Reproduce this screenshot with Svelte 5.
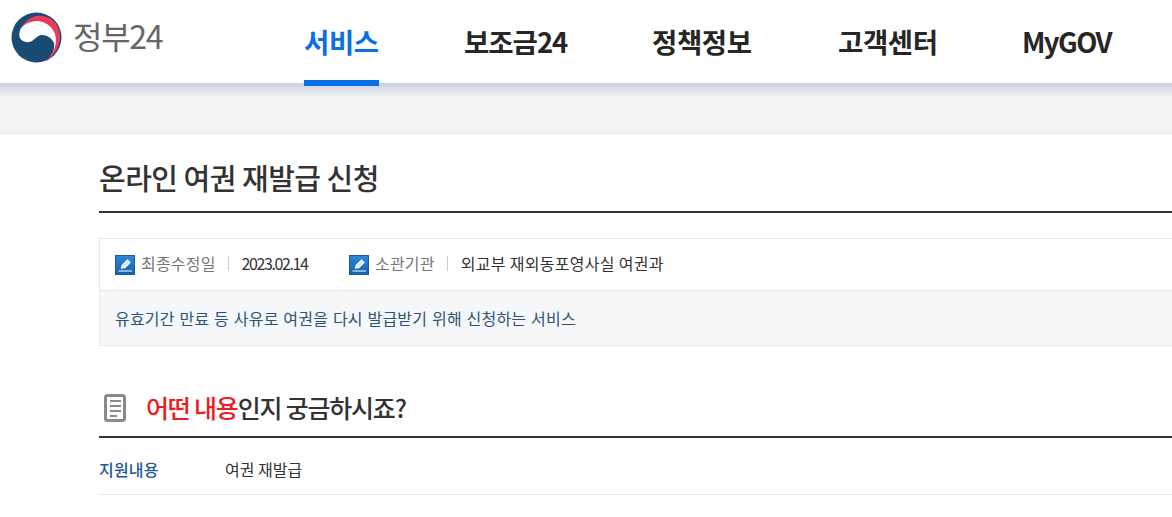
<script>
    const menus = ["서비스", "보조금24", "정책정보", "고객센터", "MyGOV"];
</script>

<div class="page">
    <header>
        <div class="logo">
            <svg width="60" height="58" viewBox="0 0 60 58">
                <circle cx="30.5" cy="29.5" r="25" fill="#1a4b73"/>
                <path d="M15 20 C19 15 26 12.5 33 13 C41 14 47 19 50 26 C53 36 48 46 40 53.5 C47 47 49 40 48 35 C46 30 41 27 36 27 C31 27 29 32 25 33.5 C20 35.5 15 33 13.5 29 C13 26 13.5 22.5 15 20Z" fill="#fff"/>
                <path d="M15 20 C19 12 26 8 33 7.7 C42 7.7 49 12 52 19 C56 29 54 39 47 47 C45 50 42 52 39.5 54 C46 47 50 40 50 32 C50 25 46 19 41 16 C35 12.5 29 12 24 14 C20 15 17 17 15 20Z" fill="#ee3a56"/>
            </svg>
            <span>정부24</span>
        </div>
        <nav>
            {#each menus as menu, i}
                <a class:active={i === 0} href="#top">{menu}</a>
            {/each}
        </nav>
    </header>
    <div class="band"></div>

    <main>
        <h1>온라인 여권 재발급 신청</h1>
        <section class="info">
            <div class="meta">
                <div class="item first">
                    <svg class="edit" width="20" height="20" viewBox="0 0 20 20">
                        <defs>
                            <linearGradient id="editfill" x1="0" y1="0" x2="0" y2="1">
                                <stop offset="0" stop-color="#2f86d8"/>
                                <stop offset="1" stop-color="#1560ae"/>
                            </linearGradient>
                        </defs>
                        <rect x="0.5" y="0.5" width="19" height="19" fill="url(#editfill)" stroke="#1a5da3"/>
                        <path d="M6.5 13 L7.3 10.2 L12.5 5 L15 7.5 L9.8 12.7Z" fill="#cfe3f7" stroke="#fff" stroke-width="1.2"/>
                        <rect x="3.5" y="15.5" width="13.5" height="1" fill="#fff"/>
                    </svg>
                    <span class="label">최종수정일</span>
                    <i></i>
                    <span class="val date">2023.02.14</span>
                </div>
                <div class="item">
                    <svg class="edit" width="20" height="20" viewBox="0 0 20 20">
                        <rect x="0.5" y="0.5" width="19" height="19" fill="url(#editfill)" stroke="#1a5da3"/>
                        <path d="M6.5 13 L7.3 10.2 L12.5 5 L15 7.5 L9.8 12.7Z" fill="#cfe3f7" stroke="#fff" stroke-width="1.2"/>
                        <rect x="3.5" y="15.5" width="13.5" height="1" fill="#fff"/>
                    </svg>
                    <span class="label">소관기관</span>
                    <i></i>
                    <span class="val">외교부 재외동포영사실 여권과</span>
                </div>
            </div>
            <p>유효기간 만료 등 사유로 여권을 다시 발급받기 위해 신청하는 서비스</p>
        </section>

        <div class="subtitle">
            <svg width="24" height="30" viewBox="0 0 24 30">
                <rect x="2.5" y="2.5" width="19" height="25" rx="2" fill="none" stroke="#8a8a8a" stroke-width="3"/>
                <path d="M7 8 H18 M7 13 H18 M7 18 H18 M7 23 H14" stroke="#8a8a8a" stroke-width="2"/>
            </svg>
            <h2><em>어떤 내용</em>인지 궁금하시죠?</h2>
        </div>
        <div class="row">
            <span class="key">지원내용</span>
            <span>여권 재발급</span>
        </div>
    </main>
</div>

<style>
    :global(body) {
        overflow: hidden;
        background: #fff;
    }

    .page {
        font-family: "Noto Sans CJK KR", "Noto Sans", sans-serif;
        color: #333;
        width: 1172px;
    }

    header {
        height: 83px;
        display: flex;
        position: relative;
    }

    .logo {
        display: flex;
        align-items: flex-start;
        width: 304px;
        padding: 8px 0 0 6px;
        box-sizing: border-box;
    }

    .logo span {
        font-size: 32px;
        line-height: 54px;
        color: #666;
        margin-left: 7px;
        letter-spacing: -1.3px;
    }

    nav {
        display: grid;
        grid-template-columns: 160px 188px 186px 184px auto;
        justify-items: start;
    }

    nav a {
        height: 86px;
        box-sizing: border-box;
        font-size: 27.5px;
        font-weight: 700;
        line-height: 83px;
        color: #262626;
        text-decoration: none;
        letter-spacing: -0.4px;
        white-space: nowrap;
    }

    nav a:nth-child(2) {
        letter-spacing: -1px;
    }

    nav a:nth-child(5) {
        letter-spacing: -1.6px;
    }

    nav a.active {
        color: #0b6fe4;
        border-bottom: 6px solid #0b6fe4;
    }

    .band {
        height: 50px;
        background: linear-gradient(#c9d2e0, #f4f2f3 14px);
        border-bottom: 1px solid #e8e6e8;
    }

    main {
        margin-left: 99px;
    }

    h1 {
        margin: 0;
        height: 79px;
        box-sizing: border-box;
        border-bottom: 2px solid #333;
        font-size: 29px;
        font-weight: 500;
        line-height: 87px;
        letter-spacing: -0.5px;
    }

    .info {
        margin-top: 25px;
        border: 1px solid #e6e8ea;
        border-right: 0;
    }

    .meta {
        height: 51px;
        display: flex;
        align-items: center;
        padding-left: 15px;
        font-size: 16px;
    }

    .item {
        display: flex;
        align-items: center;
    }

    .item.first {
        width: 234px;
    }

    .label {
        color: #777;
        margin: 0 0 4px 6px;
        letter-spacing: 0.2px;
    }

    .item i {
        width: 1px;
        height: 15px;
        background: #ccc;
        margin: 0 13px 2px 12px;
    }

    .val {
        color: #333;
        letter-spacing: 0.3px;
        margin-bottom: 4px;
    }

    .date {
        letter-spacing: -1.4px;
    }

    .info p {
        margin: 0;
        height: 54px;
        padding-left: 15px;
        line-height: 54px;
        font-size: 16px;
        letter-spacing: 0.2px;
        word-spacing: 1px;
        color: #2b5379;
        background: #f5f7f9;
        border-top: 1px solid #e6e8ea;
    }

    .subtitle {
        margin-top: 41px;
        height: 51px;
        display: flex;
        align-items: center;
        border-bottom: 2px solid #333;
        box-sizing: border-box;
        padding: 0 0 9px 4px;
    }

    .subtitle svg {
        margin-top: 2px;
    }

    h2 {
        margin: 0 0 0 19px;
        font-size: 25px;
        font-weight: 500;
        letter-spacing: -1.2px;
    }

    h2 em {
        color: #ee1c25;
        font-style: normal;
    }

    .row {
        height: 57px;
        display: flex;
        align-items: center;
        border-bottom: 1px solid #e6e6e6;
        font-size: 16px;
        box-sizing: border-box;
        padding-top: 6px;
    }

    .key {
        width: 126px;
        color: #1d5a96;
        font-weight: 500;
        letter-spacing: 0.2px;
    }
</style>
